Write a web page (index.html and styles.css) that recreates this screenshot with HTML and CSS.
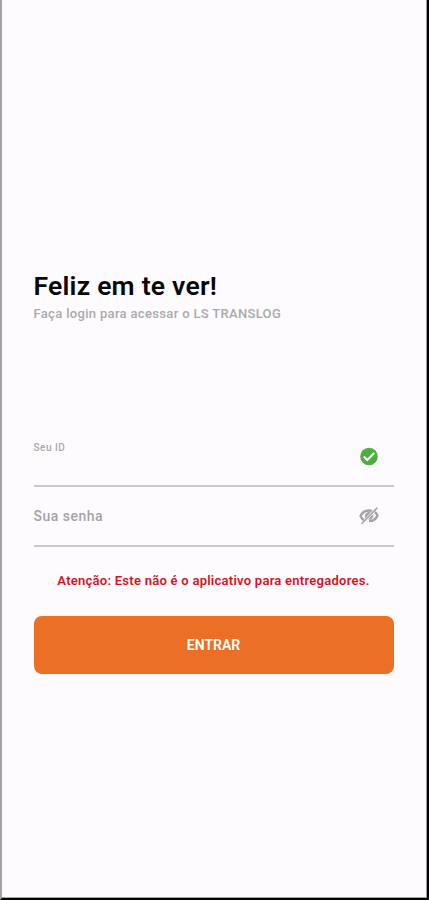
FILE: index.html
```html
<!DOCTYPE html>
<html lang="pt-BR">
<head>
<meta charset="utf-8">
<title>LS TRANSLOG</title>
<link rel="stylesheet" href="styles.css">
</head>
<body>
<main class="screen">
  <header class="intro">
    <h1 class="title"><span>Feliz em te ver!</span></h1>
    <p class="subtitle"><span>Faça login para acessar o LS TRANSLOG</span></p>
  </header>
  <form class="form">
    <div class="field field-id">
      <span class="label-small">Seu ID</span>
      <svg class="icon icon-check" viewBox="0 0 24 24"><circle cx="12" cy="12" r="10" fill="#4cae3c"/><path fill="none" stroke="#fff" stroke-width="2.400" d="M6 12l4 4 8-8"/></svg>
    </div>
    <div class="field field-password">
      <span class="label">Sua senha</span>
      <svg class="icon" viewBox="0 0 24 24"><path fill="none" stroke="#a3a3a3" stroke-width="2.800" d="M6 17.300C4.300 16.200 3 14.500 2.300 12.500 4 8.600 7.600 6.200 12 6.200c1.200 0 2.300.1 3.300.5M18.800 8c1.300 1.100 2.200 2.500 2.900 4-1.600 3.900-5.300 6.300-9.700 6.300"/><path fill="#a3a3a3" d="M14.500 7.600 7.500 15.500C6.200 11.500 9.500 7 14.500 7.600zM16.800 10.300c1 4-2 7-6 6.300z"/><path fill="none" stroke="#a3a3a3" stroke-width="1.800" d="M21.500 3 3.500 21.500"/></svg>
    </div>
    <p class="notice"><span>Atenção: Este não é o aplicativo para entregadores.</span></p>
    <button class="submit" type="button"><span>ENTRAR</span></button>
  </form>
</main>
</body>
</html>
```
FILE: styles.css
```css
* {
  box-sizing: border-box;
}

body {
  margin: 0;
  background: #fdfbfe;
  font-family: Roboto, "Liberation Sans", sans-serif;
}

.screen {
  height: 900px;
  padding: 270px 33px 0 31.500px;
  border-left: 2px solid #a3a3a5;
  border-right: 2px solid #000;
  border-bottom: 2px solid #000;
  box-shadow: inset -1px -1px 0 #a0a0a0;
  overflow: hidden;
}

.intro {
  height: 156px;
}

.title {
  margin: 0;
  font-size: 26.500px;
  line-height: 31px;
  font-weight: 600;
  letter-spacing: 0.220px;
  color: #070707;
}

.subtitle {
  margin: 5px 0 0;
  font-size: 13px;
  line-height: 16px;
  font-weight: 500;
  letter-spacing: 0.330px;
  color: #aaa9ac;
}

.form {
  width: 360px;
}

.field {
  display: flex;
  align-items: center;
  justify-content: space-between;
  height: 60px;
  padding-right: 14px;
  border-bottom: 2px solid #c9c8ca;
}

.field-id {
  height: 61px;
}

.field-password {
  padding-bottom: 1px;
}

.label-small {
  margin-bottom: 16px;
  font-size: 10px;
  font-weight: 500;
  letter-spacing: 0.500px;
  color: #a9a8ab;
}

.label {
  font-size: 14px;
  font-weight: 500;
  letter-spacing: 0.500px;
  color: #a4a3a6;
}

.icon {
  width: 22px;
  height: 21px;
}

.icon-check {
  margin-top: 2px;
}

.notice {
  margin: 26px 0 27px;
  font-size: 13px;
  line-height: 16px;
  font-weight: 600;
  letter-spacing: 0.260px;
  text-align: center;
  color: #dc1020;
}

.submit {
  display: flex;
  align-items: center;
  justify-content: center;
  width: 100%;
  height: 58px;
  padding: 0;
  border: 0;
  border-radius: 8px;
  background: #eb7026;
  color: #fff;
  font: 600 14px Roboto, "Liberation Sans", sans-serif;
}
```
